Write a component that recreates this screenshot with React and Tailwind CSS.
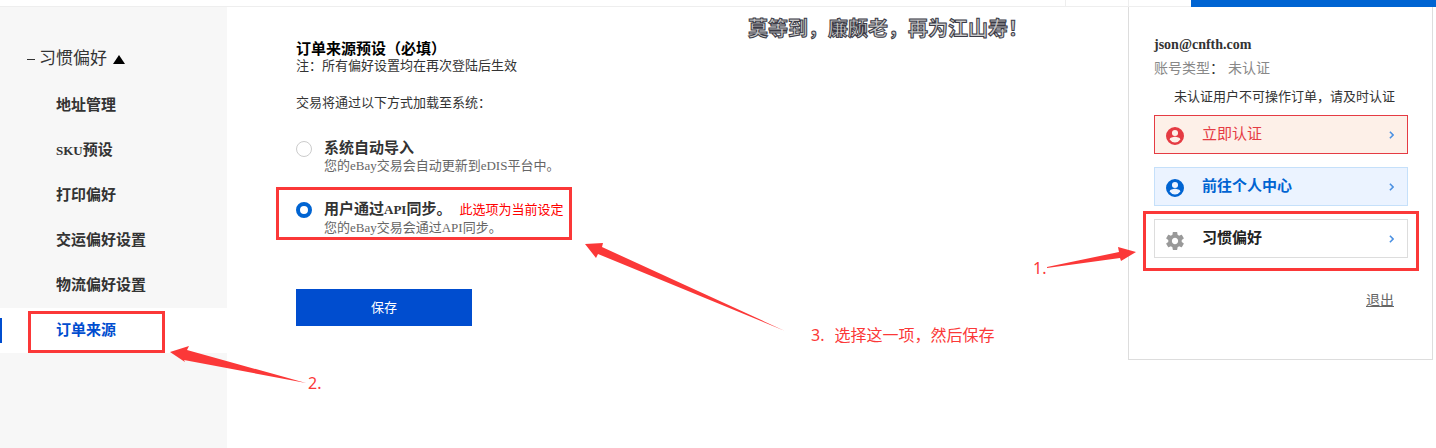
import React, { useState } from 'react'

const menuItems = ['地址管理', 'SKU预设', '打印偏好', '交运偏好设置', '物流偏好设置', '订单来源']

const UserIcon = ({ className }) => (
  <svg viewBox="2 2 20 20" fill="currentColor" className={className} aria-hidden="true">
    <path d="M12 2a10 10 0 1 0 0 20 10 10 0 0 0 0-20zm0 3.200a3.400 3.400 0 1 1 0 6.800 3.400 3.400 0 0 1 0-6.800zm0 14a7.200 7.200 0 0 1-6-3.200c.030-2 4-3.100 6-3.100s5.970 1.100 6 3.100a7.200 7.200 0 0 1-6 3.200z" />
  </svg>
)

const GearIcon = ({ className }) => (
  <svg viewBox="2 2 20 20" fill="currentColor" className={className} aria-hidden="true">
    <path d="M19.430 12.980c.040-.320.070-.640.070-.980s-.030-.660-.070-.980l2.110-1.650c.190-.150.240-.420.120-.640l-2-3.460c-.120-.220-.390-.300-.610-.220l-2.490 1c-.520-.400-1.080-.730-1.690-.980l-.380-2.650C14.460 2.180 14.250 2 14 2h-4c-.250 0-.460.180-.490.420l-.380 2.650c-.610.250-1.170.590-1.690.980l-2.490-1c-.230-.090-.490 0-.610.220l-2 3.460c-.130.220-.070.490.120.640l2.110 1.650c-.040.320-.070.650-.070.980s.030.660.070.980l-2.110 1.650c-.190.150-.240.420-.120.640l2 3.460c.120.220.390.300.610.220l2.490-1c.520.400 1.080.730 1.690.980l.380 2.650c.030.240.240.420.490.420h4c.250 0 .460-.180.490-.420l.380-2.650c.610-.250 1.170-.590 1.690-.980l2.490 1c.230.090.490 0 .610-.220l2-3.460c.120-.220.070-.490-.120-.640l-2.110-1.650zM12 15.500c-1.930 0-3.500-1.570-3.500-3.500s1.570-3.500 3.500-3.500 3.500 1.570 3.500 3.500-1.570 3.500-3.500 3.500z" />
  </svg>
)

const Chevron = () => (
  <svg viewBox="0 0 6 10" className="ml-auto h-2 w-[5px] text-[#4a90e2]" fill="none" stroke="currentColor" strokeWidth="2" aria-hidden="true">
    <path d="M1 1l4 4-4 4" />
  </svg>
)

const AccountLink = ({ icon, label, className }) => (
  <a href="#" className={`flex h-[39px] items-center border pr-[13px] pl-[11px] text-[15px] ${className}`}>
    {icon}
    <span className="ml-[18px] pb-px">{label}</span>
    <Chevron />
  </a>
)

const SourceOption = ({ value, selected, onSelect, title, description, note }) => (
  <div className="flex gap-3">
    <input
      type="radio"
      id={value}
      name="source"
      checked={selected === value}
      onChange={() => onSelect(value)}
      className="mt-[3px] size-4 shrink-0 appearance-none rounded-full border border-[#ccc] bg-white checked:border-4 checked:border-[#0064d2]"
    />
    <div>
      <label htmlFor={value} className="block text-[15px] leading-5 font-bold text-[#333]">
        {title}
        {note && <span className="ml-2 text-[13px] font-normal text-[#f00]">{note}</span>}
      </label>
      <p className="text-[13px] leading-4 text-[#666]">{description}</p>
    </div>
  </div>
)

const Arrow = ({ points, className, viewBox }) => (
  <svg viewBox={viewBox} className={`absolute fill-[#fb3838] ${className}`} aria-hidden="true">
    <polygon points={points} />
  </svg>
)

const App = () => {
  const [source, setSource] = useState('api')
  const [active, setActive] = useState('订单来源')

  return (
    <div className="min-h-screen overflow-hidden bg-white font-['Liberation_Serif','Noto_Sans_CJK_SC',serif] text-[#333]">
      <header className="flex h-[7px]">
        <div className="flex-1 border-b border-[#eee]" />
        <div className="w-[63px] border-b border-l border-[#eee]" />
        <div className="w-[63px] border-b border-l border-[#eee]" />
        <div className="w-[245px] bg-[#0064d2]" />
      </header>

      <div className="flex min-h-[441px]">
        <aside className="w-[227px] shrink-0 bg-[#f7f7f7] pt-10">
          <h2 className="flex items-center pl-[27px] text-[17px] leading-6">
            <span className="mr-1 h-px w-2 bg-[#333]" />
            习惯偏好
            <svg viewBox="0 0 12 9" className="ml-[6px] h-[9px] w-3 fill-black" aria-hidden="true">
              <path d="M6 0l6 9H0z" />
            </svg>
          </h2>
          <nav className="mt-3">
            {menuItems.map((item) => (
              <div key={item} className={`relative flex h-[45px] items-center ${item === active ? 'bg-white' : ''}`}>
                {item === active && <span className="absolute left-0 h-[25px] w-0.5 bg-[#004dcf]" />}
                <a
                  href="#"
                  onClick={() => setActive(item)}
                  className={`pl-14 text-[15px] font-bold ${item === active ? 'text-[#004dcf]' : 'text-[#333]'}`}
                >
                  {item.startsWith('SKU') ? (
                    <>
                      <span className="text-[13px]">SKU</span>预设
                    </>
                  ) : (
                    item
                  )}
                </a>
                {item === active && (
                  <span className="pointer-events-none absolute top-[3px] left-7 h-[42px] w-[137px] border-3 border-[#fb3838]">
                    <Arrow points="0,6 19,0 17,4 136,37 14,14 15,16" viewBox="0 0 136 38" className="top-[32px] left-[139px] h-[38px] w-[136px]" />
                    <span className="absolute top-[57px] left-[277px] font-['Noto_Sans',sans-serif] text-base text-[#fb3838]">2.</span>
                  </span>
                )}
              </div>
            ))}
          </nav>
        </aside>

        <main className="relative flex-1 pt-[33px] pl-[69px]">
          <h1 className="text-[15px] leading-[18px] font-bold text-black">订单来源预设（必填）</h1>
          <p className="text-[13px] leading-4">注：所有偏好设置均在再次登陆后生效</p>
          <p className="mt-[21px] text-[13px] leading-4">交易将通过以下方式加载至系统：</p>

          <form onSubmit={(e) => e.preventDefault()}>
            <div className="mt-[27px]">
              <SourceOption
                value="auto"
                selected={source}
                onSelect={setSource}
                title="系统自动导入"
                description="您的eBay交易会自动更新到eDIS平台中。"
              />
            </div>
            <div className="relative mt-[25px]">
              <SourceOption
                value="api"
                selected={source}
                onSelect={setSource}
                title={
                  <>
                    用户通过<span className="text-[13px]">API</span>同步。
                  </>
                }
                description="您的eBay交易会通过API同步。"
                note="此选项为当前设定"
              />
              <div className="pointer-events-none absolute -top-3 -left-5 h-[53px] w-[296px] border-3 border-[#fb3838]">
                <Arrow points="0,1 18,0 17,4 200,88 13,11 11,15" viewBox="0 0 200 88" className="top-[53px] left-[306px] h-[88px] w-[200px]" />
                <p className="absolute top-[133px] left-[532px] text-base whitespace-nowrap text-[#fb3838]">
                  <span className="mr-[10px] font-['Noto_Sans',sans-serif]">3.</span>选择这一项，然后保存
                </p>
              </div>
            </div>
            <button className="mt-[53px] h-[37px] w-44 bg-[#004dcf] text-[13px] text-white">保存</button>
          </form>

          <p className="absolute top-[7px] left-[521px] font-['Noto_Sans_CJK_SC',sans-serif] text-[20px] leading-7 font-bold whitespace-nowrap text-[#ccc] [-webkit-text-stroke:1px_#3b3b46]">
            莫等到，廉颇老，再为江山寿！
          </p>
        </main>

        <section className="relative mr-[3px] h-[353px] w-[305px] shrink-0 border border-t-0 border-[#ddd] pt-7 pr-6 pl-[25px]">
          <p className="text-sm leading-5 font-bold">json@cnfth.com</p>
          <p className="mt-1 text-sm leading-5 text-[#888]">
            账号类型<span className="text-[#333]">：</span>
            <span className="ml-1">未认证</span>
          </p>
          <p className="mt-2 pl-5 text-[13px] leading-5 whitespace-nowrap">未认证用户不可操作订单，请及时认证</p>

          <div className="mt-2 mb-[30px] flex flex-col gap-[13px]">
            <AccountLink
              icon={<UserIcon className="mt-0.5 size-[18px]" />}
              label="立即认证"
              className="border-[#e53b43] bg-[#fdf0e8] text-[#e53b43]"
            />
            <AccountLink
              icon={<UserIcon className="mt-0.5 size-[18px]" />}
              label="前往个人中心"
              className="border-[#c5e0fa] bg-[#ebf3ff] font-bold text-[#0064d2]"
            />
            <div className="relative">
              <AccountLink
                icon={<GearIcon className="mt-1 size-[18px] text-[#999]" />}
                label="习惯偏好"
                className="border-[#ddd] bg-white font-bold text-[#222]"
              />
              <div className="pointer-events-none absolute -top-2 -left-[11px] h-[60px] w-[276px] border-3 border-[#fb3838]">
                <Arrow points="0,20 72,5 71,0 89,5 74,14 73,11 0,21" viewBox="0 0 89 21" className="top-[33px] -left-[99px] h-[21px] w-[89px]" />
                <span className="absolute top-[42px] -left-[113px] font-['Noto_Sans',sans-serif] text-base text-[#fb3838]">1.</span>
              </div>
            </div>
          </div>
          <div className="pr-[14px] text-right">
            <a href="#" className="text-sm text-[#666] underline">
              退出
            </a>
          </div>
        </section>
      </div>
    </div>
  )
}

export default App
